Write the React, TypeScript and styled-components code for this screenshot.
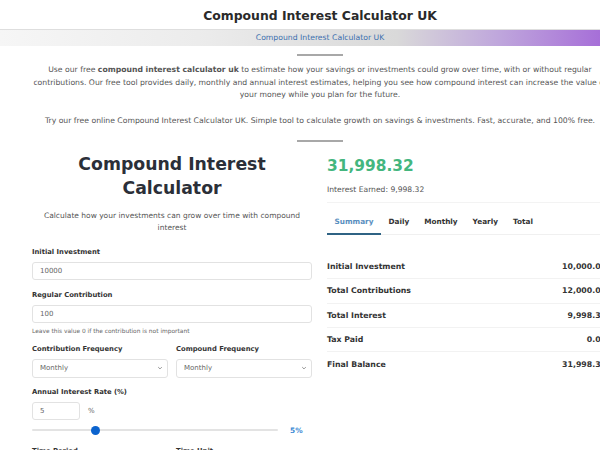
import styled, { createGlobalStyle } from "styled-components";
import { useState } from "react";

const GlobalStyle = createGlobalStyle`
  body {
    margin: 0;
    background: #fff;
    font-family: "DejaVu Sans", Verdana, sans-serif;
    color: #333;
  }
`;

const Page = styled.div`
  width: 640px;
`;

const TopTitle = styled.h1`
  margin: 0;
  height: 29px;
  padding-top: 9px;
  box-sizing: border-box;
  text-align: center;
  font-size: 12.4px;
  line-height: 14px;
  font-weight: bold;
  color: #2a2a2a;
`;

const Crumb = styled.div`
  height: 16px;
  border-top: 1px solid #dedede;
  background: linear-gradient(
    90deg,
    #f6f6f6 0%,
    #ececec 31%,
    #d9d9d9 62%,
    #bfa6dc 78%,
    #a66ed8 94%,
    #a066da 100%
  );
  text-align: center;
  font-size: 7.7px;
  line-height: 16px;
  color: #3b6fae;
`;

const Rule = styled.div<{ $top: number; $bottom: number }>`
  width: 46px;
  height: 2px;
  background: #a8a8a8;
  margin: ${(p) => p.$top}px auto ${(p) => p.$bottom}px;
`;

const Intro = styled.div`
  width: 574px;
  margin: 0 auto;
  text-align: center;
  font-size: 7.7px;
  line-height: 12.7px;
  color: #555;
`;

const Line = styled.div`
  white-space: nowrap;
`;

const Para = styled.div`
  margin-bottom: 13px;
  &:last-child {
    margin-bottom: 0;
  }
`;

const Main = styled.div`
  display: grid;
  grid-template-columns: 280px 281px;
  column-gap: 15px;
  padding: 0 32px;
`;

const FormCol = styled.div`
  display: flex;
  flex-direction: column;
`;

const Heading = styled.h2`
  margin: 0;
  text-align: center;
  font-size: 17.3px;
  line-height: 24px;
  font-weight: bold;
  color: #2b2f38;
`;

const Sub = styled.p`
  margin: 10px 0 12px;
  text-align: center;
  font-size: 7.5px;
  line-height: 12.5px;
  color: #555;
`;

const Field = styled.div<{ $gap?: number }>`
  display: flex;
  flex-direction: column;
  margin-bottom: ${(p) => p.$gap ?? 10}px;
`;

const Label = styled.label`
  font-size: 6.8px;
  line-height: 10px;
  font-weight: bold;
  color: #333;
  margin-bottom: 5px;
`;

const TextInput = styled.input<{ $w?: number }>`
  box-sizing: border-box;
  width: ${(p) => (p.$w ? `${p.$w}px` : "100%")};
  height: 18px;
  border: 1px solid #e2e2e2;
  border-radius: 3px;
  padding: 0 7px;
  font-family: inherit;
  font-size: 7px;
  color: #666;
  background: #fff;
  outline: none;
`;

const Hint = styled.div`
  font-size: 5.9px;
  line-height: 8px;
  color: #666;
  margin-top: 4px;
`;

const Pair = styled.div`
  display: grid;
  grid-template-columns: 1fr 1fr;
  column-gap: 8px;
`;

const SelectBox = styled.div`
  box-sizing: border-box;
  height: 19px;
  border: 1px solid #e2e2e2;
  border-radius: 3px;
  padding: 0 4px 0 7px;
  display: flex;
  align-items: center;
  justify-content: space-between;
  font-size: 7px;
  color: #666;
`;

const RateRow = styled.div`
  display: flex;
  align-items: center;
  gap: 8px;
  font-size: 7px;
  color: #666;
`;

const SliderRow = styled.div`
  display: flex;
  align-items: center;
  gap: 12px;
  margin-top: 6px;
  margin-bottom: 11px;
`;

const Range = styled.input`
  -webkit-appearance: none;
  appearance: none;
  margin: 0;
  width: 246px;
  height: 9px;
  background: transparent;
  &::-webkit-slider-runnable-track {
    height: 2px;
    border-radius: 1px;
    background: #e3e3e3;
  }
  &::-webkit-slider-thumb {
    -webkit-appearance: none;
    width: 9px;
    height: 9px;
    margin-top: -3.5px;
    border-radius: 50%;
    background: #0b63ce;
  }
`;

const RateValue = styled.span`
  font-size: 7.4px;
  color: #3d8bd4;
  font-weight: bold;
`;

const ResultCol = styled.div`
  display: flex;
  flex-direction: column;
`;

const Big = styled.div`
  font-size: 15.4px;
  line-height: 20px;
  font-weight: bold;
  color: #44b67e;
  margin-top: 4px;
`;

const Earned = styled.div`
  font-size: 7.6px;
  line-height: 12px;
  color: #555;
  margin-top: 8px;
  padding-bottom: 6px;
  border-bottom: 1px solid #f3f3f3;
`;

const TabBar = styled.div`
  display: flex;
  margin-top: 13px;
  border-bottom: 1px solid #f0f0f0;
`;

const Tab = styled.button<{ $active: boolean }>`
  border: none;
  background: none;
  font-family: inherit;
  font-size: 7.3px;
  font-weight: bold;
  line-height: 10px;
  padding: 1px 7.5px 6px;
  color: ${(p) => (p.$active ? "#5a8fc0" : "#333")};
  border-bottom: 2px solid ${(p) => (p.$active ? "#2f6384" : "transparent")};
  margin-bottom: -1px;
  cursor: pointer;
`;

const Table = styled.div`
  margin-top: 20px;
`;

const Row = styled.div`
  display: flex;
  justify-content: space-between;
  align-items: center;
  height: 24.4px;
  box-sizing: border-box;
  border-bottom: 1px solid #f2f2f2;
  font-size: 7.8px;
  font-weight: bold;
  color: #333;
  padding-right: 2px;
  &:last-child {
    border-bottom: none;
  }
`;

const Chevron = () => (
  <svg width="6" height="6" viewBox="0 0 10 10">
    <path d="M2 3.5 L5 6.5 L8 3.5" fill="none" stroke="#777" strokeWidth="1.3" />
  </svg>
);

const tabs = ["Summary", "Daily", "Monthly", "Yearly", "Total"];

const rows: [string, string][] = [
  ["Initial Investment", "10,000.00"],
  ["Total Contributions", "12,000.00"],
  ["Total Interest", "9,998.32"],
  ["Tax Paid", "0.00"],
  ["Final Balance", "31,998.32"],
];

export default function App() {
  const [active, setActive] = useState("Summary");
  const [rate, setRate] = useState(5);

  return (
    <Page>
      <GlobalStyle />
      <TopTitle>Compound Interest Calculator UK</TopTitle>
      <Crumb>Compound Interest Calculator UK</Crumb>
      <Rule $top={8} $bottom={8} />
      <Intro>
        <Para>
          <Line>
            Use our free <b>compound interest calculator uk</b> to estimate how your savings or
            investments could grow over time, with or without regular
          </Line>
          <Line>
            contributions. Our free tool provides daily, monthly and annual interest estimates,
            helping you see how compound interest can increase the value of
          </Line>
          <Line>your money while you plan for the future.</Line>
        </Para>
        <Para>
          <Line>
            Try our free online Compound Interest Calculator UK. Simple tool to calculate growth on
            savings &amp; investments. Fast, accurate, and 100% free.
          </Line>
        </Para>
      </Intro>
      <Rule $top={12} $bottom={10} />
      <Main>
        <FormCol>
          <Heading>
            Compound Interest
            <br />
            Calculator
          </Heading>
          <Sub>
            Calculate how your investments can grow over time with compound
            <br />
            interest
          </Sub>
          <Field>
            <Label>Initial Investment</Label>
            <TextInput defaultValue="10000" />
          </Field>
          <Field $gap={9}>
            <Label>Regular Contribution</Label>
            <TextInput defaultValue="100" />
            <Hint>Leave this value 0 if the contribution is not important</Hint>
          </Field>
          <Pair>
            <Field $gap={9}>
              <Label>Contribution Frequency</Label>
              <SelectBox>
                Monthly
                <Chevron />
              </SelectBox>
            </Field>
            <Field $gap={9}>
              <Label>Compound Frequency</Label>
              <SelectBox>
                Monthly
                <Chevron />
              </SelectBox>
            </Field>
          </Pair>
          <Field $gap={0}>
            <Label>Annual Interest Rate (%)</Label>
            <RateRow>
              <TextInput $w={48} value={rate} onChange={(e) => setRate(Number(e.target.value))} />
              %
            </RateRow>
          </Field>
          <SliderRow>
            <Range
              type="range"
              min={0}
              max={20}
              step={0.1}
              value={rate}
              onChange={(e) => setRate(Number(e.target.value))}
            />
            <RateValue>{rate}%</RateValue>
          </SliderRow>
          <Pair>
            <Label>Time Period</Label>
            <Label>Time Unit</Label>
          </Pair>
        </FormCol>
        <ResultCol>
          <Big>31,998.32</Big>
          <Earned>Interest Earned: 9,998.32</Earned>
          <TabBar>
            {tabs.map((t) => (
              <Tab key={t} $active={t === active} onClick={() => setActive(t)}>
                {t}
              </Tab>
            ))}
          </TabBar>
          <Table>
            {rows.map(([k, v]) => (
              <Row key={k}>
                <span>{k}</span>
                <span>{v}</span>
              </Row>
            ))}
          </Table>
        </ResultCol>
      </Main>
    </Page>
  );
}
